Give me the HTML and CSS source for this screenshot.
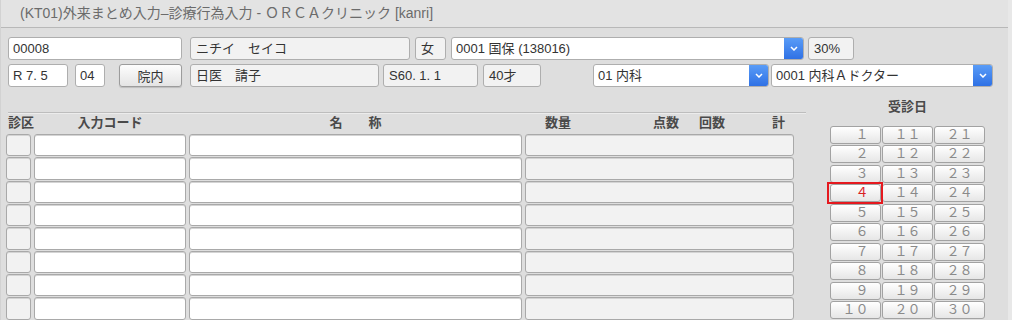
FILE: index.html
```html
<!DOCTYPE html>
<html lang="ja">
<head>
    <meta charset="UTF-8">
    <title>外来まとめ入力</title>
    <link rel="stylesheet" href="styles.css">
</head>
<body>

<div class="window">
    <div class="titlebar">(KT01)外来まとめ入力–診療行為入力 - ＯＲＣＡクリニック [kanri]</div>

    <div class="content">
        <div class="row">
            <div class="field f-ptid">00008</div>
            <div class="field readonly f-kana">ニチイ　セイコ</div>
            <div class="field readonly f-sex">女</div>
            <div class="combo f-hoken">
                <span class="combo-text">0001 国保 (138016)</span>
                <span class="combo-btn"><svg width="8" height="5" viewBox="0 0 8 5"><polyline points="1,1 4,4 7,1" fill="none" stroke="#fff" stroke-width="1.5"/></svg></span>
            </div>
            <div class="field readonly f-rate">30%</div>
        </div>

        <div class="row row-second">
            <div class="field f-date">R 7. 5</div>
            <div class="field f-day">04</div>
            <button class="btn f-innai">院内</button>
            <div class="field readonly f-name">日医　請子</div>
            <div class="field readonly f-birth">S60. 1. 1</div>
            <div class="field readonly f-age">40才</div>
            <div class="combo f-dept">
                <span class="combo-text">01 内科</span>
                <span class="combo-btn"><svg width="8" height="5" viewBox="0 0 8 5"><polyline points="1,1 4,4 7,1" fill="none" stroke="#fff" stroke-width="1.5"/></svg></span>
            </div>
            <div class="combo f-doctor">
                <span class="combo-text">0001 内科Ａドクター</span>
                <span class="combo-btn"><svg width="8" height="5" viewBox="0 0 8 5"><polyline points="1,1 4,4 7,1" fill="none" stroke="#fff" stroke-width="1.5"/></svg></span>
            </div>
        </div>

        <div class="lower">
            <div class="sheet">
                <div class="sheet-rule"></div>
                <div class="sheet-head">
                    <div class="h-kubun">診区</div>
                    <div class="h-code">入力コード</div>
                    <div class="h-name">名　　称</div>
                    <div class="h-nums">
                        <span class="h-qty">数量</span>
                        <span class="h-point">点数</span>
                        <span class="h-times">回数</span>
                        <span class="h-total">計</span>
                    </div>
                </div>
                <div class="sheet-body" id="sheetBody"></div>
            </div>

            <div class="calendar">
                <div class="cal-title">受診日</div>
                <div class="cal-grid" id="calGrid"></div>
            </div>
        </div>
    </div>
</div>

<script>
    // righe vuote del foglio di input
    var body = document.getElementById("sheetBody");
    for (var i = 0; i < 8; i++) {
        var classes = ["c-kubun", "c-code", "c-name", "c-nums"];
        for (var j = 0; j < classes.length; j++) {
            var cell = document.createElement("div");
            cell.className = "cell " + classes[j];
            body.appendChild(cell);
        }
    }

    // giorni 1-30 in cifre a larghezza piena
    function zenkaku(n) {
        var s = String(n);
        var out = "";
        for (var i = 0; i < s.length; i++) {
            out += String.fromCharCode(0xFF10 + parseInt(s[i]));
        }
        if (n < 10) {
            out = "\u3000" + out;
        }
        return out;
    }

    var grid = document.getElementById("calGrid");
    for (var d = 1; d <= 30; d++) {
        var b = document.createElement("button");
        b.className = "day";
        if (d === 4) {
            b.className += " today";
        }
        b.textContent = zenkaku(d);
        grid.appendChild(b);
    }
</script>

</body>
</html>
```

FILE: styles.css
```css
html, body {
    margin: 0;
    padding: 0;
    height: 320px;
    overflow: hidden;
}

body {
    font-family: "Liberation Sans", "Noto Sans CJK JP", sans-serif;
    font-size: 13px;
    color: #333;
    background-color: #dedede;
}

.window {
    height: 320px;
    overflow: hidden;
    border-left: 1px solid #d2d2d2;
    border-right: 4px solid #e8e8e8;
    box-sizing: border-box;
}

.titlebar {
    height: 27px;
    line-height: 27px;
    padding-left: 19px;
    font-size: 14px;
    color: #6b6b6b;
    background-color: #e3e3e3;
    border-bottom: 1px solid #b8b8b8;
}

.content {
    padding: 9px 0 0 7px;
}

.row {
    display: flex;
    height: 23px;
}

.row-second {
    margin-top: 4px;
}

.field {
    box-sizing: border-box;
    height: 23px;
    line-height: 21px;
    padding: 0 4px;
    background-color: #fff;
    border: 1px solid #aeaeae;
    border-radius: 3px;
    white-space: nowrap;
}

.field.readonly {
    background-color: #f2f2f2;
    padding-left: 5px;
}

.combo {
    box-sizing: border-box;
    height: 23px;
    display: flex;
    background-color: #fff;
    border: 1px solid #aeaeae;
    border-radius: 3px;
    overflow: hidden;
}

.combo-text {
    flex: 1;
    line-height: 21px;
    padding-left: 4px;
    white-space: nowrap;
}

.combo-btn {
    width: 20px;
    margin: -1px -1px -1px 0;
    display: flex;
    align-items: center;
    justify-content: center;
    background: linear-gradient(#5b9ef8, #2d6fe4);
}

.btn {
    box-sizing: border-box;
    height: 23px;
    padding: 0;
    font-family: inherit;
    font-size: 13px;
    color: #333;
    background: linear-gradient(#fdfdfd, #e4e4e4);
    border: 1px solid #9c9c9c;
    border-radius: 3px;
    box-shadow: 0 1px 1px rgba(0, 0, 0, 0.15);
}

/* prima riga */
.f-ptid { width: 174px; }
.f-kana { width: 220px; margin-left: 8px; }
.f-sex { width: 31px; margin-left: 5px; }
.f-hoken { width: 353px; margin-left: 5px; }
.f-rate { width: 46px; margin-left: 4px; padding-left: 6px; }

/* seconda riga */
.f-date { width: 60px; }
.f-day { width: 30px; margin-left: 7px; }
.f-innai { width: 63px; margin-left: 14px; }
.f-name { width: 189px; margin-left: 8px; }
.f-birth { width: 95px; margin-left: 4px; }
.f-age { width: 58px; margin-left: 5px; }
.f-dept { width: 176px; margin-left: 52px; }
.f-doctor { width: 222px; margin-left: 2px; }

.lower {
    display: flex;
    margin-top: 11px;
}

.sheet {
    width: 800px;
    margin-left: -2px;
    padding-top: 14px;
}

.sheet-rule {
    margin-left: 2px;
    height: 0;
    border-top: 1px solid #bdbdbd;
    border-bottom: 1px solid #ececec;
}

.sheet-head,
.sheet-body {
    display: grid;
    grid-template-columns: 25px 152px 333px 269px;
    column-gap: 3px;
}

.sheet-head {
    height: 20px;
    line-height: 18px;
    font-weight: 600;
    font-size: 13px;
    color: #4a4a4a;
}

.h-kubun { padding-left: 2px; white-space: nowrap; }
.h-code, .h-name { text-align: center; }

.h-nums {
    display: flex;
}

.h-qty { margin-left: 20px; }
.h-point { margin-left: 82px; }
.h-times { margin-left: 20px; }
.h-total { margin-left: 47px; }

.sheet-body {
    grid-auto-rows: 22.35px;
    row-gap: 1px;
}

.cell {
    background-color: #fff;
    border: 1px solid #a9a9a9;
    border-radius: 3px;
    box-shadow: inset 0 1px 0 #d4d4d4;
}

.c-kubun,
.c-nums {
    background-color: #f2f2f2;
}

.calendar {
    width: 155px;
    margin-left: 24px;
}

.cal-title {
    height: 18px;
    line-height: 18px;
    text-align: center;
    font-weight: 600;
    color: #4a4a4a;
    margin-bottom: 10px;
}

.cal-grid {
    display: grid;
    grid-template-columns: 51px 51px 51px;
    grid-template-rows: repeat(10, 18px);
    grid-auto-flow: column;
    column-gap: 1px;
    row-gap: 1.45px;
}

.day {
    height: 18px;
    padding: 0;
    font-family: "Liberation Sans", "Noto Sans CJK JP", sans-serif;
    font-size: 13px;
    line-height: 16px;
    color: #8a8a8a;
    text-align: center;
    background: linear-gradient(#ffffff, #e6e6e6);
    border: 1px solid #a2a2a2;
    border-radius: 3px;
}

.day.today {
    position: relative;
    color: #d9201f;
}

/* riquadro rosso sopra il giorno selezionato */
.day.today::after {
    content: "";
    position: absolute;
    left: -4px;
    top: -3px;
    right: -3px;
    bottom: -3px;
    border: 2px solid #e5191f;
}
```
